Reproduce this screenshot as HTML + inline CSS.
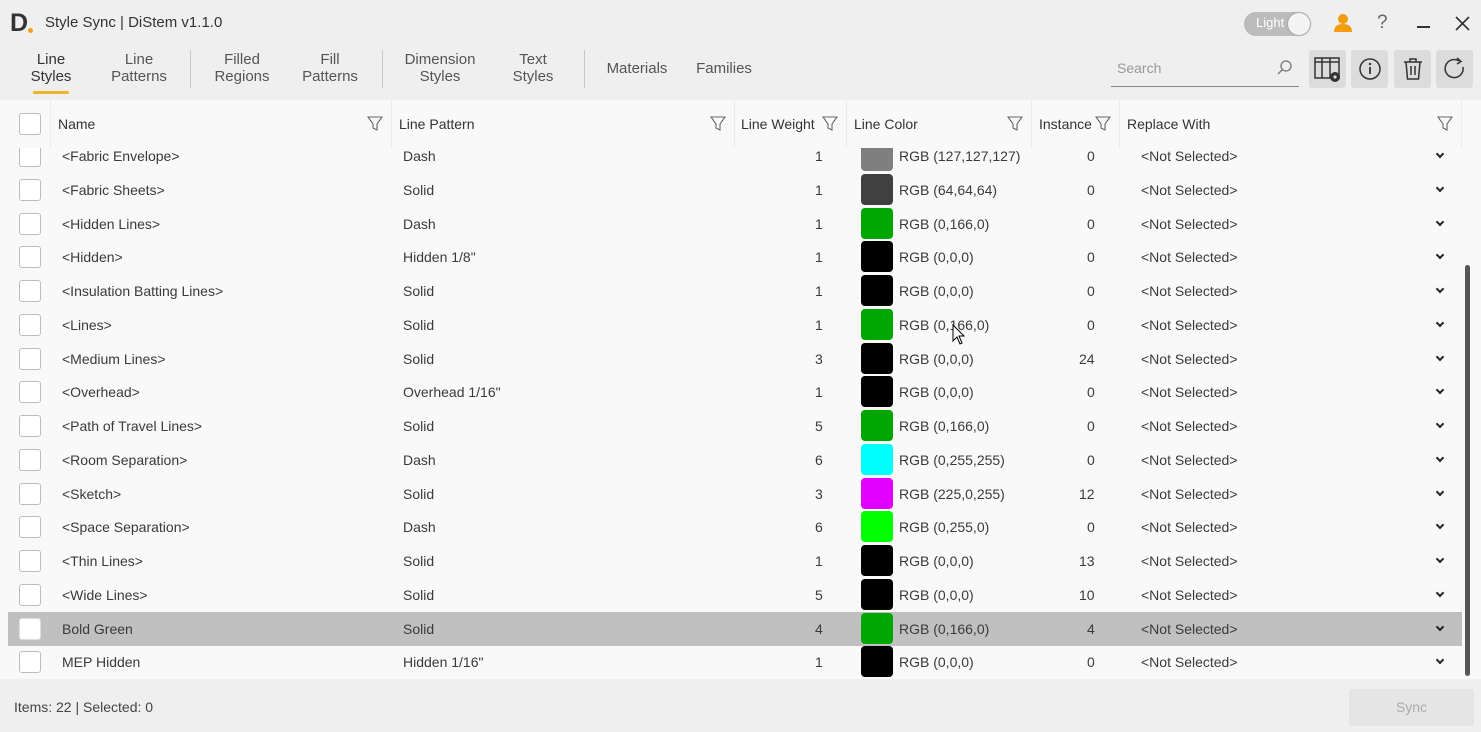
<!DOCTYPE html>
<html><head><meta charset="utf-8"><style>
*{box-sizing:border-box;margin:0;padding:0}
body{width:1481px;height:732px;overflow:hidden;background:#efefef;font-family:"Liberation Sans",sans-serif;color:#3a3a3a;position:relative;font-size:14px}
.a{position:absolute;white-space:nowrap}
.tab{position:absolute;text-align:center;font-size:15px;line-height:17px;color:#555}
.sep{position:absolute;top:50px;width:1px;height:38px;background:#c8c8c8}
.tbtn{position:absolute;top:50px;width:37px;height:38px;background:#dcdcdc;border-radius:3px}
.hdr{position:absolute;top:100px;height:48px;background:#f9f9f9;border-right:1px solid #ececec;font-size:14px;line-height:48px;padding-left:7px;color:#333}
.cb{position:absolute;left:19px;width:22px;height:22px;border:1px solid #bdbdbd;border-radius:3px;background:#fff}
.row{position:absolute;left:8px;width:1454px;height:34px;font-size:14px;line-height:34px;color:#3a3a3a}
.row span{position:absolute}
.sw{position:absolute;left:853px;top:1px;width:32px;height:31px;border-radius:4px}
.chev{position:absolute;left:1429px;top:12px;width:6px;height:6px;border-right:2px solid #222;border-bottom:2px solid #222;transform:rotate(45deg)}
</style></head><body>
<div class="a" style="left:10px;top:9px;font-size:25px;font-weight:bold;color:#333;line-height:28px">D</div>
<div class="a" style="left:28px;top:28px;width:5px;height:5px;border-radius:50%;background:#f0a020"></div>
<div class="a" style="left:45px;top:14px;font-size:15px;color:#333">Style Sync | DiStem v1.1.0</div>
<div class="a" style="left:1244px;top:12px;width:67px;height:24px;border-radius:12px;background:#bcbcbc"></div>
<div class="a" style="left:1256px;top:15px;font-size:13px;color:#fff">Light</div>
<div class="a" style="left:1288px;top:13px;width:22px;height:22px;border-radius:50%;background:#f4f4f4;box-shadow:0 0 2px #888"></div>
<svg class="a" style="left:1333px;top:13px" width="20" height="20"><circle cx="10" cy="6" r="5" fill="#f39c12"/><path d="M1 19 Q1 11 10 11 Q19 11 19 19Z" fill="#f39c12"/></svg>
<div class="a" style="left:1377px;top:12px;font-size:19px;color:#666">?</div>
<div class="a" style="left:1417px;top:26px;width:13px;height:2px;background:#333"></div>
<svg class="a" style="left:1455px;top:16px" width="15" height="15"><path d="M1 1L14 14M14 1L1 14" stroke="#333" stroke-width="1.6"/></svg>

<div class="tab" style="left:25px;top:51px;width:52px;color:#333">Line<br>Styles</div>
<div class="a" style="left:33px;top:91px;width:36px;height:3px;background:#f0b429;border-radius:2px"></div>
<div class="tab" style="left:105px;top:51px;width:68px">Line<br>Patterns</div>
<div class="sep" style="left:190px"></div>
<div class="tab" style="left:208px;top:51px;width:68px">Filled<br>Regions</div>
<div class="tab" style="left:295px;top:51px;width:70px">Fill<br>Patterns</div>
<div class="sep" style="left:382px"></div>
<div class="tab" style="left:398px;top:51px;width:84px">Dimension<br>Styles</div>
<div class="tab" style="left:505px;top:51px;width:56px">Text<br>Styles</div>
<div class="sep" style="left:584px"></div>
<div class="tab" style="left:603px;top:60px;width:68px">Materials</div>
<div class="tab" style="left:693px;top:60px;width:62px">Families</div>

<div class="a" style="left:1117px;top:60px;font-size:14px;color:#999">Search</div>
<div class="a" style="left:1111px;top:86px;width:188px;height:1px;background:#888"></div>
<svg class="a" style="left:1276px;top:59px" width="17" height="17"><circle cx="10" cy="7" r="5" fill="none" stroke="#777" stroke-width="1.3"/><path d="M6.5 10.5L2 15" stroke="#777" stroke-width="1.3"/></svg>
<div class="tbtn" style="left:1309px"></div>
<svg class="a" style="left:1313px;top:56px" width="30" height="28"><rect x="2" y="2" width="24" height="20" fill="none" stroke="#333" stroke-width="1.5"/><path d="M2 6H26M9 2V22M17 2V22" stroke="#333" stroke-width="1.5"/><circle cx="22" cy="21" r="5" fill="#333"/><circle cx="22" cy="21" r="1.6" fill="#dcdcdc"/></svg>
<div class="tbtn" style="left:1351px"></div>
<svg class="a" style="left:1358px;top:57px" width="24" height="24"><circle cx="12" cy="12" r="10" fill="none" stroke="#333" stroke-width="1.5"/><path d="M12 10V17" stroke="#333" stroke-width="1.8"/><circle cx="12" cy="7" r="1.2" fill="#333"/></svg>
<div class="tbtn" style="left:1394px"></div>
<svg class="a" style="left:1401px;top:57px" width="24" height="24"><path d="M3 5H21M9 5V2H15V5M5 5L6.5 22H17.5L19 5M10 9V18M14 9V18" fill="none" stroke="#333" stroke-width="1.5"/></svg>
<div class="tbtn" style="left:1436px"></div>
<svg class="a" style="left:1443px;top:57px" width="24" height="24"><path d="M20 10A9 9 0 1 1 16 4" fill="none" stroke="#333" stroke-width="1.5"/><path d="M14 1L18 4.5L14 7" fill="none" stroke="#333" stroke-width="1.5"/></svg>

<div class="a" style="left:0;top:100px;width:1481px;height:579px;background:#f9f9f9"></div>
<div class="hdr" style="left:8px;width:43px"></div>
<div class="cb" style="top:113px"></div>
<div class="hdr" style="left:51px;width:341px">Name</div>
<div class="hdr" style="left:392px;width:343px">Line Pattern</div>
<div class="hdr" style="left:735px;width:112px;padding-left:6px">Line Weight</div>
<div class="hdr" style="left:847px;width:185px">Line Color</div>
<div class="hdr" style="left:1032px;width:88px">Instance</div>
<div class="hdr" style="left:1120px;width:342px">Replace With</div>
<svg class="a" style="left:367px;top:116px" width="16" height="16"><path d="M1 1H15L10 8V14L6 12V8Z" fill="none" stroke="#666" stroke-width="1.1"/></svg>
<svg class="a" style="left:710px;top:116px" width="16" height="16"><path d="M1 1H15L10 8V14L6 12V8Z" fill="none" stroke="#666" stroke-width="1.1"/></svg>
<svg class="a" style="left:822px;top:116px" width="16" height="16"><path d="M1 1H15L10 8V14L6 12V8Z" fill="none" stroke="#666" stroke-width="1.1"/></svg>
<svg class="a" style="left:1007px;top:116px" width="16" height="16"><path d="M1 1H15L10 8V14L6 12V8Z" fill="none" stroke="#666" stroke-width="1.1"/></svg>
<svg class="a" style="left:1095px;top:116px" width="16" height="16"><path d="M1 1H15L10 8V14L6 12V8Z" fill="none" stroke="#666" stroke-width="1.1"/></svg>
<svg class="a" style="left:1437px;top:116px" width="16" height="16"><path d="M1 1H15L10 8V14L6 12V8Z" fill="none" stroke="#666" stroke-width="1.1"/></svg>

<div class="a" style="left:0;top:148px;width:1481px;height:531px;overflow:hidden">
<div style="position:absolute;left:0;top:-9px;width:1481px;height:560px">
<div class="row" style="top:0px"><div class="cb" style="left:11px;top:6px"></div><span style="left:54px">&lt;Fabric Envelope&gt;</span><span style="left:395px">Dash</span><span style="left:807px">1</span><div class="sw" style="background:#7f7f7f"></div><span style="left:891px">RGB (127,127,127)</span><span style="left:1079px">0</span><span style="left:1133px">&lt;Not Selected&gt;</span><div class="chev"></div></div>
<div class="row" style="top:34px"><div class="cb" style="left:11px;top:6px"></div><span style="left:54px">&lt;Fabric Sheets&gt;</span><span style="left:395px">Solid</span><span style="left:807px">1</span><div class="sw" style="background:#404040"></div><span style="left:891px">RGB (64,64,64)</span><span style="left:1079px">0</span><span style="left:1133px">&lt;Not Selected&gt;</span><div class="chev"></div></div>
<div class="row" style="top:68px"><div class="cb" style="left:11px;top:6px"></div><span style="left:54px">&lt;Hidden Lines&gt;</span><span style="left:395px">Dash</span><span style="left:807px">1</span><div class="sw" style="background:#00a600"></div><span style="left:891px">RGB (0,166,0)</span><span style="left:1079px">0</span><span style="left:1133px">&lt;Not Selected&gt;</span><div class="chev"></div></div>
<div class="row" style="top:101px"><div class="cb" style="left:11px;top:6px"></div><span style="left:54px">&lt;Hidden&gt;</span><span style="left:395px">Hidden 1/8"</span><span style="left:807px">1</span><div class="sw" style="background:#000"></div><span style="left:891px">RGB (0,0,0)</span><span style="left:1079px">0</span><span style="left:1133px">&lt;Not Selected&gt;</span><div class="chev"></div></div>
<div class="row" style="top:135px"><div class="cb" style="left:11px;top:6px"></div><span style="left:54px">&lt;Insulation Batting Lines&gt;</span><span style="left:395px">Solid</span><span style="left:807px">1</span><div class="sw" style="background:#000"></div><span style="left:891px">RGB (0,0,0)</span><span style="left:1079px">0</span><span style="left:1133px">&lt;Not Selected&gt;</span><div class="chev"></div></div>
<div class="row" style="top:169px"><div class="cb" style="left:11px;top:6px"></div><span style="left:54px">&lt;Lines&gt;</span><span style="left:395px">Solid</span><span style="left:807px">1</span><div class="sw" style="background:#00a600"></div><span style="left:891px">RGB (0,166,0)</span><span style="left:1079px">0</span><span style="left:1133px">&lt;Not Selected&gt;</span><div class="chev"></div></div>
<div class="row" style="top:203px"><div class="cb" style="left:11px;top:6px"></div><span style="left:54px">&lt;Medium Lines&gt;</span><span style="left:395px">Solid</span><span style="left:807px">3</span><div class="sw" style="background:#000"></div><span style="left:891px">RGB (0,0,0)</span><span style="left:1071px">24</span><span style="left:1133px">&lt;Not Selected&gt;</span><div class="chev"></div></div>
<div class="row" style="top:236px"><div class="cb" style="left:11px;top:6px"></div><span style="left:54px">&lt;Overhead&gt;</span><span style="left:395px">Overhead 1/16"</span><span style="left:807px">1</span><div class="sw" style="background:#000"></div><span style="left:891px">RGB (0,0,0)</span><span style="left:1079px">0</span><span style="left:1133px">&lt;Not Selected&gt;</span><div class="chev"></div></div>
<div class="row" style="top:270px"><div class="cb" style="left:11px;top:6px"></div><span style="left:54px">&lt;Path of Travel Lines&gt;</span><span style="left:395px">Solid</span><span style="left:807px">5</span><div class="sw" style="background:#00a600"></div><span style="left:891px">RGB (0,166,0)</span><span style="left:1079px">0</span><span style="left:1133px">&lt;Not Selected&gt;</span><div class="chev"></div></div>
<div class="row" style="top:304px"><div class="cb" style="left:11px;top:6px"></div><span style="left:54px">&lt;Room Separation&gt;</span><span style="left:395px">Dash</span><span style="left:807px">6</span><div class="sw" style="background:#00ffff"></div><span style="left:891px">RGB (0,255,255)</span><span style="left:1079px">0</span><span style="left:1133px">&lt;Not Selected&gt;</span><div class="chev"></div></div>
<div class="row" style="top:338px"><div class="cb" style="left:11px;top:6px"></div><span style="left:54px">&lt;Sketch&gt;</span><span style="left:395px">Solid</span><span style="left:807px">3</span><div class="sw" style="background:#e100ff"></div><span style="left:891px">RGB (225,0,255)</span><span style="left:1071px">12</span><span style="left:1133px">&lt;Not Selected&gt;</span><div class="chev"></div></div>
<div class="row" style="top:371px"><div class="cb" style="left:11px;top:6px"></div><span style="left:54px">&lt;Space Separation&gt;</span><span style="left:395px">Dash</span><span style="left:807px">6</span><div class="sw" style="background:#00ff00"></div><span style="left:891px">RGB (0,255,0)</span><span style="left:1079px">0</span><span style="left:1133px">&lt;Not Selected&gt;</span><div class="chev"></div></div>
<div class="row" style="top:405px"><div class="cb" style="left:11px;top:6px"></div><span style="left:54px">&lt;Thin Lines&gt;</span><span style="left:395px">Solid</span><span style="left:807px">1</span><div class="sw" style="background:#000"></div><span style="left:891px">RGB (0,0,0)</span><span style="left:1071px">13</span><span style="left:1133px">&lt;Not Selected&gt;</span><div class="chev"></div></div>
<div class="row" style="top:439px"><div class="cb" style="left:11px;top:6px"></div><span style="left:54px">&lt;Wide Lines&gt;</span><span style="left:395px">Solid</span><span style="left:807px">5</span><div class="sw" style="background:#000"></div><span style="left:891px">RGB (0,0,0)</span><span style="left:1071px">10</span><span style="left:1133px">&lt;Not Selected&gt;</span><div class="chev"></div></div>
<div class="row" style="top:473px;background:#c0c0c0"><div class="cb" style="left:11px;top:6px;border-color:#ddd"></div><span style="left:54px">Bold Green</span><span style="left:395px">Solid</span><span style="left:807px">4</span><div class="sw" style="background:#00a600"></div><span style="left:891px">RGB (0,166,0)</span><span style="left:1079px">4</span><span style="left:1133px">&lt;Not Selected&gt;</span><div class="chev"></div></div>
<div class="row" style="top:506px"><div class="cb" style="left:11px;top:6px"></div><span style="left:54px">MEP Hidden</span><span style="left:395px">Hidden 1/16"</span><span style="left:807px">1</span><div class="sw" style="background:#000"></div><span style="left:891px">RGB (0,0,0)</span><span style="left:1079px">0</span><span style="left:1133px">&lt;Not Selected&gt;</span><div class="chev"></div></div>
</div></div>
<div class="a" style="left:1465px;top:265px;width:5px;height:411px;background:#555;border-radius:3px"></div>
<svg class="a" style="left:952px;top:324px" width="14" height="22"><path d="M1 1V17L5 13L8 20L10 19L7 12H12Z" fill="#fff" stroke="#000" stroke-width="1"/></svg>

<div class="a" style="left:14px;top:699px;font-size:14px;color:#444">Items: 22 | Selected: 0</div>
<div class="a" style="left:1349px;top:689px;width:125px;height:37px;background:#e5e5e5;border-radius:3px;text-align:center;line-height:37px;color:#aaa;font-size:14px">Sync</div>
</body></html>
